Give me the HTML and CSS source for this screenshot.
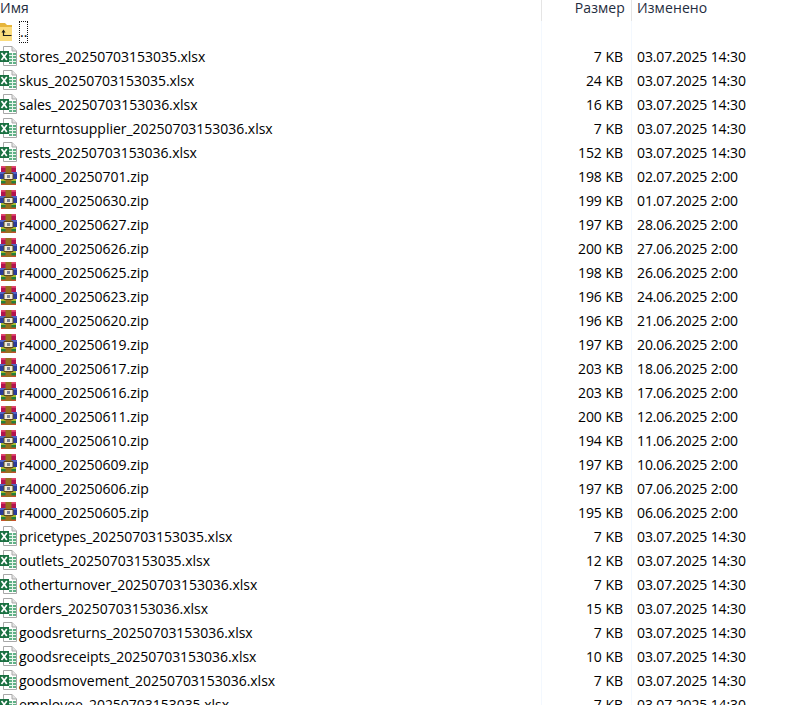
FILE: index.html
```html
<!DOCTYPE html>
<html lang="ru">
<head>
<meta charset="utf-8">
<title>Файлы</title>
<link rel="stylesheet" href="styles.css">
</head>
<body>
<svg class="defs" width="0" height="0" aria-hidden="true">
  <symbol id="xl" viewBox="0 0 18 20">
    <path d="M3.5 .5H12L16.5 5V19.5H3.5Z" fill="#fff" stroke="#a8a8a8"/>
    <path d="M12 .5V5H16.5" fill="#e4e4e4" stroke="#a8a8a8"/>
    <path d="M9 7h7v11h-7z" fill="#5fb085"/>
    <path d="M9 9.5h7M9 12.5h7M9 15.5h7M12.5 7v11" stroke="#e8f5ec" stroke-width="1"/>
    <path d="M0 5H9V16H0Z" fill="#1a7041"/>
    <path d="M1.5 7L6.8 14M6.8 7L1.5 14" stroke="#fff" stroke-width="1.7"/>
  </symbol>
  <symbol id="rar" viewBox="0 0 18 20">
    <path d="M1 0H16V6H1Z" fill="#b3134f"/>
    <path d="M1 0H16V1.8H1Z" fill="#e2476f"/>
    <path d="M0 6H17V13H0Z" fill="#2a3c9c"/>
    <path d="M0 6H17V8H0Z" fill="#5264c4"/>
    <path d="M1 13H16V19H1Z" fill="#23803a"/>
    <path d="M1 13H16V15H1Z" fill="#a9bb2c"/>
    <path d="M1 17.5H16V19H1Z" fill="#c9502a"/>
    <path d="M5.5 0H11.5V19H5.5Z" fill="#96711f"/>
    <path d="M4 7.5H13V13.5H4Z" fill="#f1ead6" stroke="#5d4a1c"/>
    <path d="M7 9H10V12H7Z" fill="#7a8296"/>
  </symbol>
  <symbol id="up" viewBox="0 0 18 20">
    <path d="M0 1H5L7 3H12V18H0Z" fill="#e6b53c"/>
    <path d="M0 5H12V19H0Z" fill="#fbdc7d"/>
    <path d="M1.5 10.5L3.5 7.5L5.5 10.5Z" fill="#1c1c1c"/>
    <path d="M3.5 9V13.5H11.5" fill="none" stroke="#1c1c1c" stroke-width="1.2"/>
  </symbol>
</svg>
<main class="list">
  <div class="head">
    <div class="c-name">Имя</div>
    <div class="c-size">Размер</div>
    <div class="c-date">Изменено</div>
  </div>
  <div class="row parent">
    <div class="c-name"><svg class="ico ico-up"><use href="#up"/></svg><span class="focus">..</span></div>
    <div class="c-size"></div>
    <div class="c-date"></div>
  </div>
  <div class="row"><div class="c-name"><svg class="ico"><use href="#xl"/></svg>stores_20250703153035.xlsx</div><div class="c-size">7 KB</div><div class="c-date">03.07.2025 14:30</div></div>
  <div class="row"><div class="c-name"><svg class="ico"><use href="#xl"/></svg>skus_20250703153035.xlsx</div><div class="c-size">24 KB</div><div class="c-date">03.07.2025 14:30</div></div>
  <div class="row"><div class="c-name"><svg class="ico"><use href="#xl"/></svg>sales_20250703153036.xlsx</div><div class="c-size">16 KB</div><div class="c-date">03.07.2025 14:30</div></div>
  <div class="row"><div class="c-name"><svg class="ico"><use href="#xl"/></svg>returntosupplier_20250703153036.xlsx</div><div class="c-size">7 KB</div><div class="c-date">03.07.2025 14:30</div></div>
  <div class="row"><div class="c-name"><svg class="ico"><use href="#xl"/></svg>rests_20250703153036.xlsx</div><div class="c-size">152 KB</div><div class="c-date">03.07.2025 14:30</div></div>
  <div class="row"><div class="c-name"><svg class="ico"><use href="#rar"/></svg>r4000_20250701.zip</div><div class="c-size">198 KB</div><div class="c-date">02.07.2025 2:00</div></div>
  <div class="row"><div class="c-name"><svg class="ico"><use href="#rar"/></svg>r4000_20250630.zip</div><div class="c-size">199 KB</div><div class="c-date">01.07.2025 2:00</div></div>
  <div class="row"><div class="c-name"><svg class="ico"><use href="#rar"/></svg>r4000_20250627.zip</div><div class="c-size">197 KB</div><div class="c-date">28.06.2025 2:00</div></div>
  <div class="row"><div class="c-name"><svg class="ico"><use href="#rar"/></svg>r4000_20250626.zip</div><div class="c-size">200 KB</div><div class="c-date">27.06.2025 2:00</div></div>
  <div class="row"><div class="c-name"><svg class="ico"><use href="#rar"/></svg>r4000_20250625.zip</div><div class="c-size">198 KB</div><div class="c-date">26.06.2025 2:00</div></div>
  <div class="row"><div class="c-name"><svg class="ico"><use href="#rar"/></svg>r4000_20250623.zip</div><div class="c-size">196 KB</div><div class="c-date">24.06.2025 2:00</div></div>
  <div class="row"><div class="c-name"><svg class="ico"><use href="#rar"/></svg>r4000_20250620.zip</div><div class="c-size">196 KB</div><div class="c-date">21.06.2025 2:00</div></div>
  <div class="row"><div class="c-name"><svg class="ico"><use href="#rar"/></svg>r4000_20250619.zip</div><div class="c-size">197 KB</div><div class="c-date">20.06.2025 2:00</div></div>
  <div class="row"><div class="c-name"><svg class="ico"><use href="#rar"/></svg>r4000_20250617.zip</div><div class="c-size">203 KB</div><div class="c-date">18.06.2025 2:00</div></div>
  <div class="row"><div class="c-name"><svg class="ico"><use href="#rar"/></svg>r4000_20250616.zip</div><div class="c-size">203 KB</div><div class="c-date">17.06.2025 2:00</div></div>
  <div class="row"><div class="c-name"><svg class="ico"><use href="#rar"/></svg>r4000_20250611.zip</div><div class="c-size">200 KB</div><div class="c-date">12.06.2025 2:00</div></div>
  <div class="row"><div class="c-name"><svg class="ico"><use href="#rar"/></svg>r4000_20250610.zip</div><div class="c-size">194 KB</div><div class="c-date">11.06.2025 2:00</div></div>
  <div class="row"><div class="c-name"><svg class="ico"><use href="#rar"/></svg>r4000_20250609.zip</div><div class="c-size">197 KB</div><div class="c-date">10.06.2025 2:00</div></div>
  <div class="row"><div class="c-name"><svg class="ico"><use href="#rar"/></svg>r4000_20250606.zip</div><div class="c-size">197 KB</div><div class="c-date">07.06.2025 2:00</div></div>
  <div class="row"><div class="c-name"><svg class="ico"><use href="#rar"/></svg>r4000_20250605.zip</div><div class="c-size">195 KB</div><div class="c-date">06.06.2025 2:00</div></div>
  <div class="row"><div class="c-name"><svg class="ico"><use href="#xl"/></svg>pricetypes_20250703153035.xlsx</div><div class="c-size">7 KB</div><div class="c-date">03.07.2025 14:30</div></div>
  <div class="row"><div class="c-name"><svg class="ico"><use href="#xl"/></svg>outlets_20250703153035.xlsx</div><div class="c-size">12 KB</div><div class="c-date">03.07.2025 14:30</div></div>
  <div class="row"><div class="c-name"><svg class="ico"><use href="#xl"/></svg>otherturnover_20250703153036.xlsx</div><div class="c-size">7 KB</div><div class="c-date">03.07.2025 14:30</div></div>
  <div class="row"><div class="c-name"><svg class="ico"><use href="#xl"/></svg>orders_20250703153036.xlsx</div><div class="c-size">15 KB</div><div class="c-date">03.07.2025 14:30</div></div>
  <div class="row"><div class="c-name"><svg class="ico"><use href="#xl"/></svg>goodsreturns_20250703153036.xlsx</div><div class="c-size">7 KB</div><div class="c-date">03.07.2025 14:30</div></div>
  <div class="row"><div class="c-name"><svg class="ico"><use href="#xl"/></svg>goodsreceipts_20250703153036.xlsx</div><div class="c-size">10 KB</div><div class="c-date">03.07.2025 14:30</div></div>
  <div class="row"><div class="c-name"><svg class="ico"><use href="#xl"/></svg>goodsmovement_20250703153036.xlsx</div><div class="c-size">7 KB</div><div class="c-date">03.07.2025 14:30</div></div>
  <div class="row"><div class="c-name"><svg class="ico"><use href="#xl"/></svg>employee_20250703153035.xlsx</div><div class="c-size">7 KB</div><div class="c-date">03.07.2025 14:30</div></div>
</main>
</body>
</html>
```

FILE: styles.css
```css
html, body {
  margin: 0;
  height: 705px;
  overflow: hidden;
  background: #fff;
}
.defs { display: block; height: 0; }
.list {
  font-family: "Open Sans", sans-serif;
  font-size: 14px;
  letter-spacing: -0.03px;
  color: #000;
}
.head, .row {
  display: grid;
  grid-template-columns: 542px 90px 1fr;
}
.head { height: 21px; line-height: 15px; color: #1f2d40; letter-spacing: 0.1px; }
.row { height: 24px; line-height: 24px; }
.c-name { display: flex; align-items: center; white-space: nowrap; border-right: 1px solid #f3f8fe; }
.c-size { text-align: right; padding-right: 8px; border-right: 1px solid #f3f8fe; }
.c-date { padding-left: 5px; white-space: nowrap; letter-spacing: -0.12px; }
.head .c-name { align-items: flex-start; border-right-color: #e5e5e5; }
.head .c-size { padding-right: 6px; border-right-color: #e5e5e5; }
.head .c-date { letter-spacing: 0.1px; }
.ico { width: 18px; height: 20px; margin: -3px 1px 0 0; flex: none; }
.focus { display: inline-block; width: 9px; height: 22px; line-height: 22px; box-sizing: border-box; padding-left: 1px; margin-top: -2px; outline: 1px dotted #111; outline-offset: -1px; }
```
